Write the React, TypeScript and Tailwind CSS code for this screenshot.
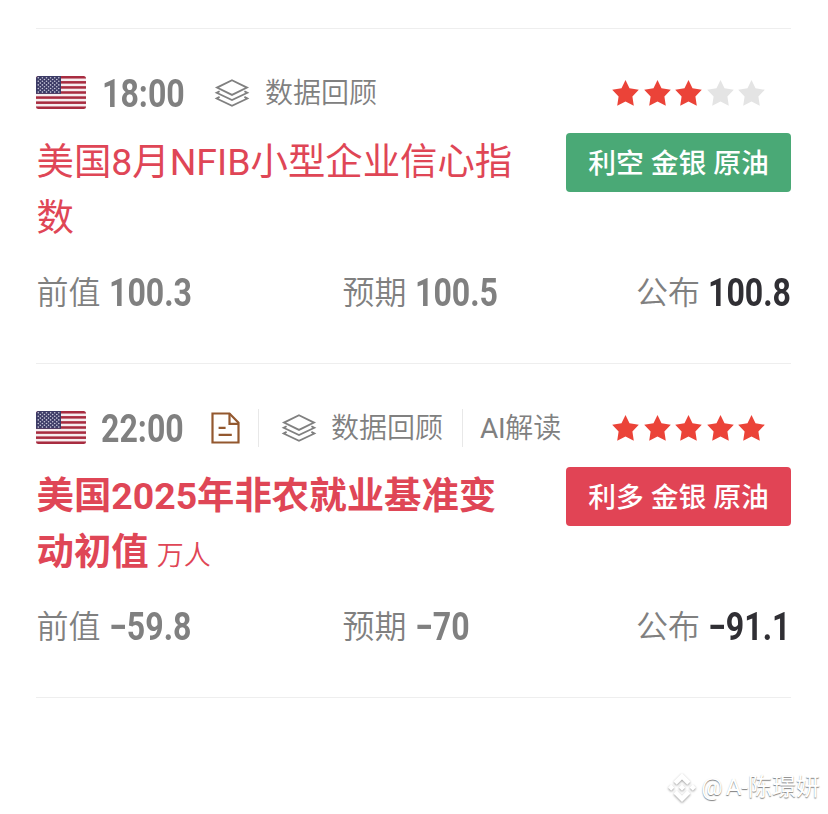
import React from "react";

const cjk = "font-['Roboto','Noto_Sans_CJK_SC',sans-serif]";
const numeric = "font-['Roboto','Liberation_Sans',sans-serif]";

function Flag() {
  return (
    <svg className="mb-[2px] block h-[33px] w-[50px] shrink-0" viewBox="0 0 50 33">
      <defs>
        <clipPath id="flagClip">
          <rect width="50" height="33" rx="2.5" />
        </clipPath>
      </defs>
      <g clipPath="url(#flagClip)">
        <rect width="50" height="33" fill="#f6eef0" />
        {[0, 1, 2, 3, 4, 5, 6].map((i) => (
          <rect key={i} x="0" y={i * 5.077} width="50" height="2.54" fill="#a82c40" />
        ))}
        <rect width="25" height="17.8" fill="#3c3b66" />
        {[0, 1, 2, 3, 4, 5, 6, 7, 8].map((r) =>
          [0, 1, 2, 3, 4, 5].slice(r % 2).map((c) => (
            <circle
              key={`${r}-${c}`}
              cx={2.3 + c * 4.1 - (r % 2 ? 2.05 : 0)}
              cy={1.7 + r * 1.8}
              r="0.8"
              fill="#c9c9da"
            />
          ))
        )}
      </g>
    </svg>
  );
}

function Layers() {
  return (
    <svg
      className="block h-[30px] w-[36px] shrink-0"
      viewBox="0 0 36 30"
      fill="none"
      stroke="#808080"
      strokeWidth="1.8"
    >
      <path d="M18 2.3 L33 9.6 L18 16.9 L3 9.6 Z" />
      <path d="M5.6 13.2 L2.6 14.8 L18 22 L33.4 14.8 L30.4 13.2" />
      <path d="M5.6 18.9 L2.6 20.5 L18 27.8 L33.4 20.5 L30.4 18.9" />
    </svg>
  );
}

function Doc() {
  return (
    <svg
      className="block h-[32px] w-[29px] shrink-0"
      viewBox="0 0 29 32"
      fill="none"
      stroke="#93582f"
      strokeWidth="2.2"
    >
      <path d="M1.5 1.5 H18.5 L27.5 10.8 V30.5 H1.5 Z" />
      <path d="M18.5 1.5 V11.8 H27.5" />
      <path d="M7.6 15.8 H14.6 M7.6 22.8 H20.8" />
    </svg>
  );
}

function Stars({ count }: { count: number }) {
  return (
    <div className="mr-[26px] ml-auto flex gap-[4.5px]">
      {[0, 1, 2, 3, 4].map((i) => (
        <svg key={i} className="block h-[27px] w-[27px]" viewBox="0 0 27 27">
          <path
            d="M13.5 0 L17.5 8.3 L26.8 9.8 L20.4 16.4 L21.8 25.8 L13.5 21.6 L5.2 25.8 L6.6 16.4 L0.2 9.8 L9.5 8.3 Z"
            fill={i < count ? "#eb4338" : "#e4e4e4"}
          />
        </svg>
      ))}
    </div>
  );
}

function Num({ text, width, dark }: { text: string; width: string; dark?: boolean }) {
  return (
    <span className={`block ${width} shrink-0 pt-px`}>
      <span
        className={`${numeric} block w-max origin-left scale-x-[0.845] whitespace-nowrap text-[38px] leading-[40px] font-bold ${
          dark ? "text-[#302f34]" : "text-[#808080]"
        }`}
      >
        {text}
      </span>
    </span>
  );
}

function Label({ children }: { children: string }) {
  return (
    <span className="mr-[8px] whitespace-nowrap pt-px text-[32px] leading-[40px] font-[350] text-[#808080]">
      {children}
    </span>
  );
}

function Tag({ children }: { children: React.ReactNode }) {
  return (
    <span className="block whitespace-nowrap pt-px text-[28px] leading-[40px] font-[350] text-[#808080]">
      {children}
    </span>
  );
}

function Badge({ text, color }: { text: string; color: string }) {
  return (
    <div
      className={`flex h-[59px] w-[225px] shrink-0 items-center justify-center rounded-[4px] ${color} whitespace-nowrap pt-[2px] text-[27.8px] leading-none font-medium text-white`}
    >
      {text}
    </div>
  );
}

function Values({ items, widths }: { items: string[]; widths: string[] }) {
  return (
    <div className="mt-[26px] flex h-[40px] items-center pl-[0.5px]">
      <div className="flex w-[306px]">
        <Label>前值</Label>
        <Num text={items[0]} width={widths[0]} />
      </div>
      <div className="flex">
        <Label>预期</Label>
        <Num text={items[1]} width={widths[1]} />
      </div>
      <div className="ml-auto flex">
        <Label>公布</Label>
        <Num text={items[2]} width={widths[2]} dark />
      </div>
    </div>
  );
}

export default function App() {
  return (
    <div className={`${cjk} h-[814px] w-[828px] overflow-hidden bg-white pt-[28px]`} lang="zh-CN">
      <div className="ml-[36px] w-[755px]">
        <section className="h-[335px] border-t border-[#eeeeee] pt-[44px]">
          <div className="flex h-[40px] items-center">
            <Flag />
            <div className="ml-[16px]">
              <Num text="18:00" width="w-[97px]" />
            </div>
            <div className="ml-[15px]">
              <Layers />
            </div>
            <div className="ml-[15px]">
              <Tag>数据回顾</Tag>
            </div>
            <Stars count={3} />
          </div>
          <div className="mt-[20px] flex justify-between">
            <h2 className="pt-px pl-[0.5px] text-[37.4px] leading-[56px] font-normal text-[#df4656]">
              美国8月NFIB小型企业信心指
              <br />数
            </h2>
            <Badge text="利空 金银 原油" color="bg-[#4aa976]" />
          </div>
          <Values items={["100.3", "100.5", "100.8"]} widths={["w-[82px]", "w-[82px]", "w-[83px]"]} />
        </section>

        <section className="h-[334px] border-t border-[#eeeeee] pt-[44px]">
          <div className="flex h-[40px] items-center">
            <Flag />
            <div className="ml-[15px]">
              <Num text="22:00" width="w-[97px]" />
            </div>
            <div className="ml-[13px]">
              <Doc />
            </div>
            <div className="ml-[18px] h-[38px] w-px bg-[#e8e8e8]" />
            <div className="ml-[22px]">
              <Layers />
            </div>
            <div className="ml-[14px]">
              <Tag>数据回顾</Tag>
            </div>
            <div className="ml-[19px] h-[38px] w-px bg-[#e8e8e8]" />
            <div className="ml-[17px]">
              <Tag>
                <span className="font-normal tracking-[-0.3px]">AI</span>解读
              </Tag>
            </div>
            <Stars count={5} />
          </div>
          <div className="mt-[19px] flex justify-between">
            <h2 className="pt-px pl-[0.5px] text-[37.4px] leading-[56px] font-bold text-[#df4656]">
              美国2025年非农就业基准变
              <br />
              动初值
              <span className="ml-[8px] text-[27px] leading-none font-[350]">万人</span>
            </h2>
            <Badge text="利多 金银 原油" color="bg-[#e14455]" />
          </div>
          <Values items={["−59.8", "−70", "−91.1"]} widths={["w-[82px]", "w-[56px]", "w-[83px]"]} />
        </section>

        <div className="h-px bg-[#eeeeee]" />
      </div>

      <div className="mt-[73px] flex h-[32px] items-center justify-end pr-[8px]">
        <svg
          className="mr-[4px] block h-[31px] w-[30px] drop-shadow-[0_1px_1px_rgba(0,0,0,0.4)]"
          viewBox="0 0 30 31"
          fill="#ffffff"
        >
          <path d="M15 1 L23.5 9.5 L20.3 12.7 L15 7.4 L9.7 12.7 L6.5 9.5 Z" />
          <path d="M15 30 L23.5 21.5 L20.3 18.3 L15 23.6 L9.7 18.3 L6.5 21.5 Z" />
          <path d="M15 12.3 L18.2 15.5 L15 18.7 L11.8 15.5 Z" />
          <path d="M4.2 12.3 L7.4 15.5 L4.2 18.7 L1 15.5 Z" />
          <path d="M25.8 12.3 L29 15.5 L25.8 18.7 L22.6 15.5 Z" />
        </svg>
        <span className="whitespace-nowrap text-[24px] leading-[32px] font-normal text-white [text-shadow:0_1px_1px_rgba(0,0,0,0.5)]">
          <span className="mr-[3px]">@</span>A-陈璟妍
        </span>
      </div>
    </div>
  );
}
